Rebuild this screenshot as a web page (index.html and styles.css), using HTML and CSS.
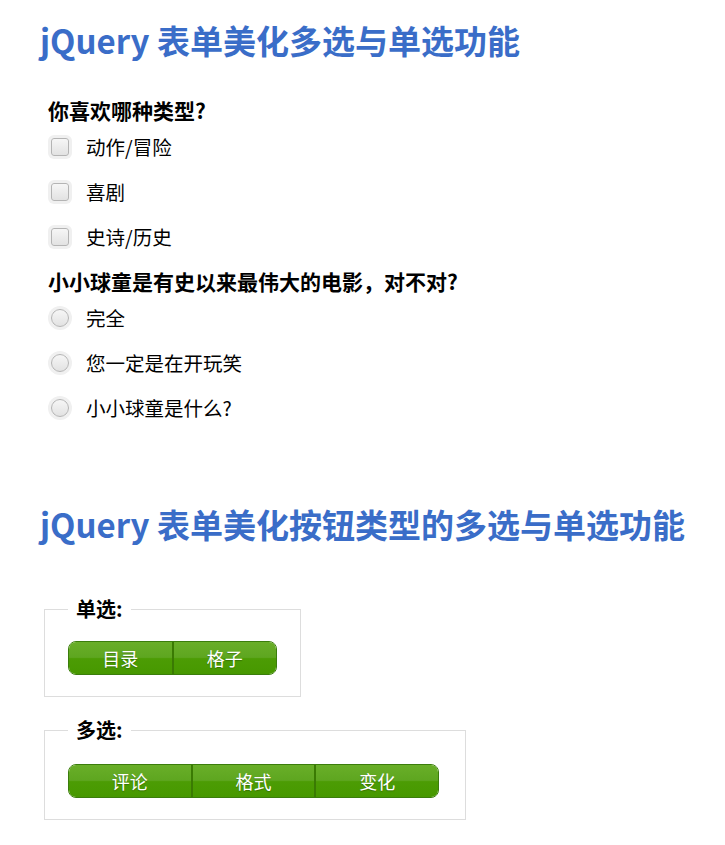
FILE: index.html
```html
<!DOCTYPE html>
<html lang="zh-CN">
<head>
  <meta charset="UTF-8">
  <meta name="viewport" content="width=device-width, initial-scale=1.0">
  <title>jQuery 表单美化多选与单选功能</title>
  <link rel="stylesheet" href="styles.css">
</head>
<body>

  <div class="container">
    <h1>jQuery 表单美化多选与单选功能</h1>

    <div class="question">
      <h3>你喜欢哪种类型?</h3>
      <label class="option"><span class="fake-check"></span>动作/冒险</label>
      <label class="option"><span class="fake-check"></span>喜剧</label>
      <label class="option"><span class="fake-check"></span>史诗/历史</label>
    </div>

    <div class="question">
      <h3>小小球童是有史以来最伟大的电影，对不对?</h3>
      <label class="option"><span class="fake-radio"></span>完全</label>
      <label class="option"><span class="fake-radio"></span>您一定是在开玩笑</label>
      <label class="option"><span class="fake-radio"></span>小小球童是什么?</label>
    </div>

    <h1 class="second-title">jQuery 表单美化按钮类型的多选与单选功能</h1>

    <fieldset class="box box-single">
      <legend>单选:</legend>
      <div class="btn-group">
        <span class="btn">目录</span>
        <span class="btn">格子</span>
      </div>
    </fieldset>

    <fieldset class="box box-multi">
      <legend>多选:</legend>
      <div class="btn-group">
        <span class="btn">评论</span>
        <span class="btn">格式</span>
        <span class="btn">变化</span>
      </div>
    </fieldset>
  </div>

</body>
</html>
```

FILE: styles.css
```css
body {
  font-family: "Noto Sans CJK SC", "Noto Sans", sans-serif;
  background-color: #fff;
  color: #000;
  margin: 0;
  padding: 0;
}
.container {
  padding: 20px 40px;
}
h1 {
  font-size: 33px;
  line-height: 40px;
  color: #3a6dc8;
  margin: 0;
  font-weight: bold;
}
.question {
  padding-left: 8px;
  margin-top: 36px;
}
.question + .question {
  margin-top: 8px;
}
h3 {
  font-size: 21px;
  line-height: 28px;
  margin: 0;
  font-weight: bold;
}
.option {
  display: flex;
  align-items: center;
  height: 45px;
  font-size: 19.5px;
}
.fake-check,
.fake-radio {
  width: 16px;
  height: 16px;
  margin-left: 3px;
  margin-right: 17px;
  border: 1px solid #b4b4b4;
  background: linear-gradient(#f6f6f6, #e2e2e2);
  box-shadow: 0 0 0 3px #f0f0f0;
}
.fake-check {
  border-radius: 3px;
}
.fake-radio {
  border-radius: 50%;
}
.second-title {
  margin-top: 74px;
}
.box {
  border: 1px solid #ddd;
  margin: 52px 0 0 4px;
  padding: 19px 23px 21px;
  box-sizing: border-box;
}
.box + .box {
  margin-top: 20px;
}
.box-single {
  width: 257px;
}
.box-multi {
  width: 422px;
  padding-top: 21px;
  padding-right: 26px;
}
legend {
  font-size: 20px;
  line-height: 26px;
  font-weight: bold;
  padding: 0 8px;
  margin-left: 0;
}
.btn-group {
  display: flex;
  border: 1px solid #3b7d0c;
  border-radius: 8px;
  overflow: hidden;
}
.btn {
  flex: 1;
  height: 32px;
  line-height: 32px;
  text-align: center;
  color: #fff;
  font-size: 18px;
  text-shadow: 0 1px 1px rgba(0, 0, 0, 0.25);
  background: linear-gradient(#69ae28 0%, #5ea620 48%, #4c9c04 52%, #479800 100%);
}
.btn + .btn {
  border-left: 2px solid #3a7a03;
}
```
